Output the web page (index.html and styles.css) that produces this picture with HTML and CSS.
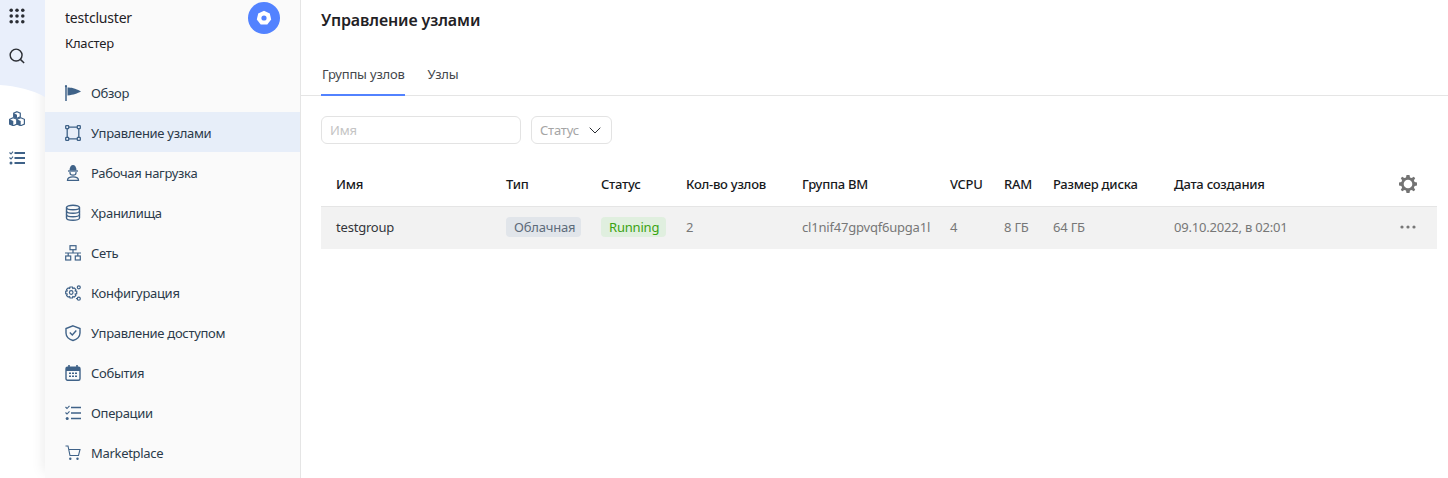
FILE: index.html
```html
<!DOCTYPE html>
<html>
<head>
    <title>Управление узлами</title>
    <link rel="stylesheet" href="styles.css">
</head>
<body>
    <div class="app">
        <div class="rail">
            <svg class="rail-bg" width="45" height="98" viewBox="0 0 45 98"><path d="M0 0H45V97C33 90 16 86 0 85Z" fill="#e9effb"/></svg>
            <button class="rail-btn rail-grid">
                <svg width="16" height="16" viewBox="0 0 18 18" fill="#2a2d33">
                    <circle cx="2.500" cy="2.500" r="2"/><circle cx="9" cy="2.500" r="2"/><circle cx="15.500" cy="2.500" r="2"/>
                    <circle cx="2.500" cy="9" r="2"/><circle cx="9" cy="9" r="2"/><circle cx="15.500" cy="9" r="2"/>
                    <circle cx="2.500" cy="15.500" r="2"/><circle cx="9" cy="15.500" r="2"/><circle cx="15.500" cy="15.500" r="2"/>
                </svg>
            </button>
            <button class="rail-btn rail-search">
                <svg width="16" height="16" viewBox="0 0 18 18" fill="none" stroke="#2a2d33" stroke-width="1.600">
                    <circle cx="8" cy="8" r="6.700"/><path d="M12.800 12.800L17 17"/>
                </svg>
            </button>
            <button class="rail-btn rail-cubes">
                <svg width="16" height="15" viewBox="0 0 16 15">
                    <path d="M8 .7L11.300 2.200V5.800L8 7.300L4.700 5.800V2.200Z" fill="#fff" stroke="#3f6288" stroke-width="1.200"/>
                    <path d="M4.700 2.200L8 3.800V7.300L4.700 5.800Z" fill="#3f6288"/>
                    <path d="M4.300 6.700L8 8.300V13L4.300 14.700L.6 13V8.300Z" fill="#fff" stroke="#3f6288" stroke-width="1.200"/>
                    <path d="M.6 8.300L4.300 10V14.700L.6 13Z" fill="#3f6288"/>
                    <path d="M11.700 6.700L15.400 8.300V13L11.700 14.700L8 13V8.300Z" fill="#fff" stroke="#3f6288" stroke-width="1.200"/>
                    <path d="M8 8.300L11.700 10V14.700L8 13Z" fill="#3f6288"/>
                </svg>
            </button>
            <button class="rail-btn rail-ops">
                <svg width="16" height="14" viewBox="0 0 16 14" fill="none" stroke="#3f6288" stroke-width="1.800">
                    <path d="M5.500 2H16M5.500 7H16M5.500 12H16"/>
                    <path d="M.5 1.500L2 3L4 .6M.5 6.500L2 8L4 5.600" stroke-width="1.100"/>
                    <circle cx="2" cy="12" r="1.500" fill="#3f6288" stroke="none"/>
                </svg>
            </button>
        </div>

        <div class="sidebar">
            <div class="cluster">
                <div>
                    <div class="cluster-name">testcluster</div>
                    <div class="cluster-type">Кластер</div>
                </div>
                <div class="cluster-logo">
                    <svg width="16" height="16" viewBox="0 0 16 16"><path d="M8 .8L13.800 3.500L15.200 9.500L11.300 14.600H4.700L.8 9.500L2.200 3.500Z" fill="#fff"/><circle cx="8" cy="8" r="2.600" fill="#5282ff"/></svg>
                </div>
            </div>
            <ul class="nav">
                <li class="nav-item">
                    <svg class="nav-icon" viewBox="0 0 16 16"><path d="M1 1V16" stroke-width="1.500"/><circle cx="1" cy="1.200" r="1.100" class="solid"/><path d="M2.500 2.500C6 2.500 10 3 16 6.500C12 8.500 9 9.800 2.500 10.500Z" class="solid"/></svg>
                    Обзор
                </li>
                <li class="nav-item active">
                    <svg class="nav-icon" viewBox="0 0 16 16" stroke-width="1.300"><rect x=".7" y=".7" width="3" height="3" rx=".6"/><rect x="12.300" y=".7" width="3" height="3" rx=".6"/><rect x=".7" y="12.300" width="3" height="3" rx=".6"/><rect x="12.300" y="12.300" width="3" height="3" rx=".6"/><path d="M3.700 2.200H12.300M3.700 13.800H12.300M2.200 3.700V12.300M13.800 3.700V12.300"/></svg>
                    Управление узлами
                </li>
                <li class="nav-item">
                    <svg class="nav-icon" viewBox="0 0 16 16"><path d="M4.500 5.500C4.500 2 6 0 8 0S11.500 2 11.500 5.500Z" class="solid"/><path d="M3 6H13" stroke-width="1.300"/><path d="M5 7V8C5 10.800 11 10.800 11 8V7" stroke-width="1.200"/><path d="M2.500 15.300C2.500 13 4 11.800 8 11.800S13.500 13 13.500 15.300Z" stroke-width="1.300"/></svg>
                    Рабочая нагрузка
                </li>
                <li class="nav-item">
                    <svg class="nav-icon" viewBox="0 0 16 16" stroke-width="1.400"><ellipse cx="8" cy="2.500" rx="6.500" ry="2.300"/><path d="M1.500 2.500V13C1.500 14.300 4.500 15.300 8 15.300S14.500 14.300 14.500 13V2.500"/><path d="M1.500 6C1.500 7.300 4.500 8.300 8 8.300S14.500 7.300 14.500 6M1.500 9.500C1.500 10.800 4.500 11.800 8 11.800S14.500 10.800 14.500 9.500"/></svg>
                    Хранилища
                </li>
                <li class="nav-item">
                    <svg class="nav-icon" viewBox="0 0 16 16" stroke-width="1.200"><rect x="5" y=".7" width="6" height="4"/><rect x=".7" y="11" width="5" height="4"/><rect x="10.300" y="11" width="5" height="4"/><path d="M8 4.700V8M0 8H16M3.200 8V11M12.800 8V11"/></svg>
                    Сеть
                </li>
                <li class="nav-item">
                    <svg class="nav-icon" viewBox="0 0 16 16" stroke-width="1.200"><path d="M5 2H7.400L7.800 3.500L9.200 2.900L10.800 4.500L10.200 5.900L11.700 6.300V8.700L10.200 9.100L10.800 10.500L9.200 12.100L7.800 11.500L7.400 13H5L4.600 11.500L3.200 12.100L1.600 10.500L2.200 9.100L.7 8.700V6.300L2.200 5.900L1.600 4.500L3.200 2.900L4.600 3.500Z"/><circle cx="6.200" cy="7.500" r="1.800"/><circle cx="13.800" cy="2.300" r="1.500"/><circle cx="13.800" cy="13.700" r="1.500"/><path d="M11 13.500L12.300 13.700"/></svg>
                    Конфигурация
                </li>
                <li class="nav-item">
                    <svg class="nav-icon" viewBox="0 0 16 16" stroke-width="1.400"><path d="M8 .8L15 3.500V8C15 11.500 12 14.500 8 15.500C4 14.500 1 11.500 1 8V3.500Z"/><path d="M4.800 7.500L7.300 10L11.300 5.500"/></svg>
                    Управление доступом
                </li>
                <li class="nav-item">
                    <svg class="nav-icon" viewBox="0 0 16 16" stroke-width="1.400"><rect x="1" y="2.200" width="14" height="13" rx="1.500"/><path d="M4 0V3M12 0V3" stroke-width="1.600"/><path d="M1 2.500H15V6H1Z" class="solid"/><path d="M4 8.300H6M7 8.300H9M10 8.300H12M4 11.300H6M7 11.300H9M10 11.300H12" stroke-width="1.500"/></svg>
                    События
                </li>
                <li class="nav-item">
                    <svg class="nav-icon" viewBox="0 0 16 16" stroke-width="1.700"><path d="M6 2.500H16M6 8H16M6 13.500H16"/><path d="M.5 2L2 3.500L4.500 .8M.5 7.500L2 9L4.500 6.300" stroke-width="1.100"/><circle cx="2.200" cy="13.500" r="1.500" class="solid"/></svg>
                    Операции
                </li>
                <li class="nav-item">
                    <svg class="nav-icon" viewBox="0 0 16 16" stroke-width="1.100"><path d="M.5 1H3L5 10.500H13.500L15 4.500H3.800"/><circle cx="5.300" cy="13.800" r="1.200" class="solid"/><circle cx="12.500" cy="13.800" r="1.200" class="solid"/></svg>
                    Marketplace
                </li>
            </ul>
        </div>

        <div class="main">
            <h1 class="title">Управление узлами</h1>
            <div class="tabs">
                <div class="tab tab-active">Группы узлов</div>
                <div class="tab">Узлы</div>
            </div>
            <div class="filters">
                <input class="filter-name" placeholder="Имя">
                <div class="filter-status">
                    Статус
                    <svg width="12" height="7" viewBox="0 0 12 7" fill="none" stroke="#2a2d33"><path d="M.7 .7L6 6L11.300 .7"/></svg>
                </div>
            </div>
            <table class="groups">
                <thead>
                    <tr>
                        <th class="c-name">Имя</th>
                        <th class="c-type">Тип</th>
                        <th class="c-status">Статус</th>
                        <th class="c-count">Кол-во узлов</th>
                        <th class="c-vm">Группа ВМ</th>
                        <th class="c-cpu">VCPU</th>
                        <th class="c-ram">RAM</th>
                        <th class="c-disk">Размер диска</th>
                        <th class="c-date">Дата создания</th>
                        <th class="c-act">
                            <svg class="gear" width="18" height="18" viewBox="0 0 18 18"><path d="M7.500 0H10.500L11 2.400L12.700 3.100L14.800 1.800L16.200 3.200L14.900 5.300L15.600 7L18 7.500V10.500L15.600 11L14.900 12.700L16.200 14.800L14.800 16.200L12.700 14.900L11 15.600L10.500 18H7.500L7 15.600L5.300 14.900L3.200 16.200L1.800 14.800L3.100 12.700L2.400 11L0 10.500V7.500L2.400 7L3.100 5.300L1.800 3.200L3.200 1.800L5.300 3.100L7 2.400Z" fill="#737373"/><circle cx="9" cy="9" r="4.300" fill="#fff"/></svg>
                        </th>
                    </tr>
                </thead>
                <tbody>
                    <tr>
                        <td class="cell-name">testgroup</td>
                        <td><span class="tag tag-type">Облачная</span></td>
                        <td><span class="tag tag-run">Running</span></td>
                        <td>2</td>
                        <td>cl1nif47gpvqf6upga1l</td>
                        <td>4</td>
                        <td>8 ГБ</td>
                        <td>64 ГБ</td>
                        <td>09.10.2022, в 02:01</td>
                        <td class="c-act">
                            <svg class="dots" width="16" height="4" viewBox="0 0 16 4" fill="#777"><circle cx="2" cy="2" r="1.600"/><circle cx="8" cy="2" r="1.600"/><circle cx="14" cy="2" r="1.600"/></svg>
                        </td>
                    </tr>
                </tbody>
            </table>
        </div>
    </div>
</body>
</html>
```

FILE: styles.css
```css
html, body {
    margin: 0;
    height: 100%;
    overflow: hidden;
    background: #fff;
}

body {
    font-family: "Noto Sans", "Open Sans", sans-serif;
    font-size: 13px;
    letter-spacing: -0.2px;
    color: #1f2125;
}

.app {
    display: flex;
    height: 478px;
}

/* left rail */
.rail {
    position: relative;
    width: 45px;
    flex-shrink: 0;
    display: flex;
    flex-direction: column;
    padding: 8px 0 0 8px;
    box-sizing: border-box;
}

.rail-bg {
    position: absolute;
    top: 0;
    left: 0;
}

.rail-btn {
    position: relative;
    display: flex;
    width: 18px;
    justify-content: center;
    padding: 0;
    border: 0;
    background: none;
    margin-bottom: 24px;
}

.rail-search {
    margin-bottom: 47px;
}

.rail-cubes {
    margin-bottom: 25px;
}

/* sidebar */
.sidebar {
    width: 255px;
    flex-shrink: 0;
    background: #fafafa;
    border-right: 1px solid #e5e5e5;
    box-shadow: -8px 0 12px -6px rgba(0, 0, 0, 0.08);
}

.cluster {
    display: flex;
    justify-content: space-between;
    height: 72px;
    box-sizing: border-box;
    padding: 2px 20px 0 20px;
}

.cluster-name {
    font-size: 14px;
    line-height: 32px;
}

.cluster-type {
    line-height: 20px;
    margin-top: -1px;
}

.cluster-logo {
    display: flex;
    align-items: center;
    justify-content: center;
    width: 32px;
    height: 32px;
    border-radius: 50%;
    background: #5282ff;
}

.nav {
    list-style: none;
    margin: 0;
    padding: 0;
}

.nav-item {
    display: flex;
    align-items: center;
    height: 40px;
    box-sizing: border-box;
    padding: 1px 0 0 20px;
    gap: 10px;
    letter-spacing: -0.3px;
    color: #2b3a4a;
}

.nav-item.active {
    background: #e7eef9;
}

.nav-icon {
    width: 16px;
    height: 16px;
    flex-shrink: 0;
    fill: none;
    stroke: #3f6288;
    overflow: visible;
}

.nav-icon .solid {
    fill: #3f6288;
    stroke: none;
}

/* main */
.main {
    flex: 1;
    min-width: 0;
    padding-right: 11px;
}

.title {
    margin: 0;
    padding: 8px 20px 0;
    font-size: 16px;
    line-height: 24px;
    font-weight: 600;
    letter-spacing: -0.1px;
}

.tabs {
    display: flex;
    gap: 23px;
    margin-top: 22px;
    margin-right: -11px;
    padding-left: 20px;
    height: 42px;
    box-sizing: border-box;
    border-bottom: 1px solid #e5e5e5;
}

.tab {
    line-height: 40px;
    color: #44474c;
}

.tab-active {
    height: 42px;
    box-sizing: border-box;
    padding-left: 1px;
    border-bottom: 2px solid #5282ff;
}

.filters {
    display: flex;
    gap: 10px;
    margin: 20px 0 21px 20px;
}

.filter-name {
    width: 200px;
    height: 28px;
    box-sizing: border-box;
    padding: 0 8px;
    border: 1px solid #e3e3e3;
    border-radius: 6px;
    font: inherit;
    letter-spacing: inherit;
    outline: none;
}

.filter-name::placeholder {
    color: #c4c4c4;
}

.filter-status {
    display: flex;
    align-items: center;
    gap: 10px;
    width: 81px;
    height: 28px;
    box-sizing: border-box;
    padding-left: 8px;
    border: 1px solid #e3e3e3;
    border-radius: 6px;
    color: #a5a5a5;
}

/* table */
.groups {
    width: 1116px;
    margin-left: 20px;
    table-layout: fixed;
    border-collapse: collapse;
}

.groups th,
.groups td {
    box-sizing: border-box;
    padding: 0 0 2px 15px;
    text-align: left;
    white-space: nowrap;
}

.groups th {
    height: 41px;
    font-weight: 500;
    letter-spacing: -0.25px;
    color: #17191c;
    border-bottom: 1px solid #e5e5e5;
}

.groups td {
    height: 43px;
    background: #f2f2f2;
    color: #777;
}

.groups .cell-name {
    color: #33363b;
}

.c-name { width: 170px; }
.c-type { width: 95px; }
.c-status { width: 85px; }
.c-count { width: 116px; }
.c-vm { width: 148px; }
.c-cpu { width: 54px; }
.c-ram { width: 49px; }
.c-disk { width: 121px; }
.c-date { width: 225px; }

.groups .c-act {
    width: 53px;
}

.gear,
.dots {
    display: block;
}

.dots {
    margin-left: 1px;
}

.tag {
    display: inline-block;
    line-height: 20px;
    padding: 0 7px 0 8px;
    border-radius: 4px;
}

.tag-type {
    padding-right: 6px;
    background: #e1e5ea;
    color: #5d6b7a;
}

.tag-run {
    background: #e0efdf;
    color: #3aa312;
}
```
